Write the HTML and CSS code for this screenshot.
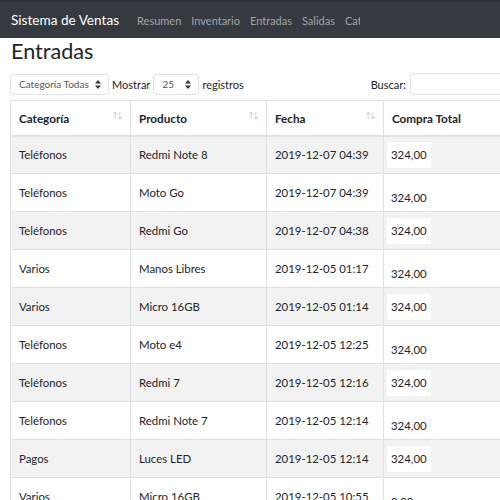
FILE: index.html
```html
<!DOCTYPE html>
<html lang="es">
<head>
<meta charset="utf-8">
<title>Entradas</title>
<link rel="stylesheet" href="styles.css">
</head>
<body>
<nav class="navbar">
  <span class="brand">Sistema de Ventas</span>
  <ul class="nav">
    <li>Resumen</li>
    <li>Inventario</li>
    <li>Entradas</li>
    <li>Salidas</li>
    <li>Categorías</li>
  </ul>
</nav>
<main class="page">
  <h1 class="title">Entradas</h1>
  <div class="controls">
    <div class="left">
      <span class="select sel-cat">Categoría Todas <svg class="caret" width="6" height="9" viewBox="0 0 6 9"><path d="M3 0L6 3.5H0Z M3 9L6 5.5H0Z" fill="#333"/></svg></span>
      <span>Mostrar</span>
      <span class="select sel-num">25 <svg class="caret" width="6" height="9" viewBox="0 0 6 9"><path d="M3 0L6 3.5H0Z M3 9L6 5.5H0Z" fill="#333"/></svg></span>
      <span>registros</span>
    </div>
    <div class="right">
      <span>Buscar:</span>
      <span class="search"></span>
    </div>
  </div>
  <table class="grid">
    <colgroup>
      <col class="c1"><col class="c2"><col class="c3"><col class="c4">
    </colgroup>
    <thead>
      <tr>
        <th>Categoría<span class="sort">↑↓</span></th>
        <th>Producto<span class="sort">↑↓</span></th>
        <th>Fecha<span class="sort">↑↓</span></th>
        <th>Compra Total</th>
      </tr>
    </thead>
    <tbody>
      <tr class="odd"><td>Teléfonos</td><td>Redmi Note 8</td><td>2019-12-07 04:39</td><td class="amt"><span class="box">324,00</span></td></tr>
      <tr><td>Teléfonos</td><td>Moto Go</td><td>2019-12-07 04:39</td><td class="amt low"><span class="box">324,00</span></td></tr>
      <tr class="odd"><td>Teléfonos</td><td>Redmi Go</td><td>2019-12-07 04:38</td><td class="amt"><span class="box">324,00</span></td></tr>
      <tr><td>Varios</td><td>Manos Libres</td><td>2019-12-05 01:17</td><td class="amt low"><span class="box">324,00</span></td></tr>
      <tr class="odd"><td>Varios</td><td>Micro 16GB</td><td>2019-12-05 01:14</td><td class="amt"><span class="box">324,00</span></td></tr>
      <tr><td>Teléfonos</td><td>Moto e4</td><td>2019-12-05 12:25</td><td class="amt low"><span class="box">324,00</span></td></tr>
      <tr class="odd"><td>Teléfonos</td><td>Redmi 7</td><td>2019-12-05 12:16</td><td class="amt"><span class="box">324,00</span></td></tr>
      <tr><td>Teléfonos</td><td>Redmi Note 7</td><td>2019-12-05 12:14</td><td class="amt low"><span class="box">324,00</span></td></tr>
      <tr class="odd"><td>Pagos</td><td>Luces LED</td><td>2019-12-05 12:14</td><td class="amt"><span class="box">324,00</span></td></tr>
      <tr><td>Varios</td><td>Micro 16GB</td><td>2019-12-05 10:55</td><td class="amt low"><span class="box">0,00</span></td></tr>
    </tbody>
  </table>
</main>
</body>
</html>
```
FILE: styles.css
```css
* { box-sizing: border-box; }
html, body { margin: 0; padding: 0; }
body {
  font-family: Lato, "Open Sans", sans-serif;
  color: #212529;
  background: #fff;
  font-size: 11.5px;
  overflow: hidden;
}
.navbar {
  height: 38px;
  background: #343a40;
  display: flex;
  align-items: center;
  padding-left: 11px;
  border-top: 2px solid #2e3338;
}
.brand {
  color: #fff;
  font-size: 13.6px;
  margin-right: 13px;
  white-space: nowrap;
}
.nav {
  list-style: none;
  margin: 0;
  padding: 0;
  display: flex;
  width: 228px;
  overflow: hidden;
  white-space: nowrap;
}
.nav li {
  color: rgba(255,255,255,0.55);
  font-size: 11px;
  padding: 0 5px;
}
.page { padding: 0 0 0 10px; }
.title {
  margin: 0;
  font-size: 21.6px;
  font-weight: 400;
  line-height: 26px;
  height: 26px;
  padding-left: 1px;
}
.controls {
  display: flex;
  justify-content: space-between;
  align-items: center;
  height: 22px;
  margin-top: 9px;
  margin-bottom: 5px;
  white-space: nowrap;
  font-size: 11px;
}
.left, .right {
  display: flex;
  align-items: center;
  gap: 3px;
}
.select {
  display: inline-flex;
  align-items: center;
  justify-content: space-between;
  height: 21px;
  border: 1px solid #e0e3e7;
  border-radius: 3px;
  padding: 0 7px 0 8px;
  font-size: 10px;
  color: #555;
  background: #fff;
}
.sel-cat { width: 99px; }
.sel-num { width: 46px; }
.caret { display: block; }
.right { gap: 4px; margin-right: -28px; }
.search {
  display: inline-block;
  width: 118px;
  height: 22px;
  border: 1px solid #e0e3e7;
  border-radius: 3px;
}
.grid {
  border-collapse: collapse;
  table-layout: fixed;
  width: 520px;
}
.c1 { width: 120px; }
.c2 { width: 136px; }
.c3 { width: 117px; }
.c4 { width: 147px; }
.grid th, .grid td {
  border: 1px solid #dee2e6;
  text-align: left;
  padding: 0 8px;
  white-space: nowrap;
}
.grid th {
  height: 35px;
  font-weight: 700;
  font-size: 11.7px;
  position: relative;
  border-bottom: 2px solid #dee2e6;
}
.sort {
  position: absolute;
  right: 8px;
  top: 9px;
  font-size: 8px;
  color: #cfcfcf;
  letter-spacing: -1px;
}
.grid td { height: 38px; font-size: 11.4px; }
.grid tr.odd td { background: #f2f2f2; }
.grid td.amt { padding: 0 3px; }
.box {
  display: inline-block;
  background: #fff;
  padding: 5px 4px;
  line-height: 16px;
}
.grid td.low .box { position: relative; top: 5px; }
```
